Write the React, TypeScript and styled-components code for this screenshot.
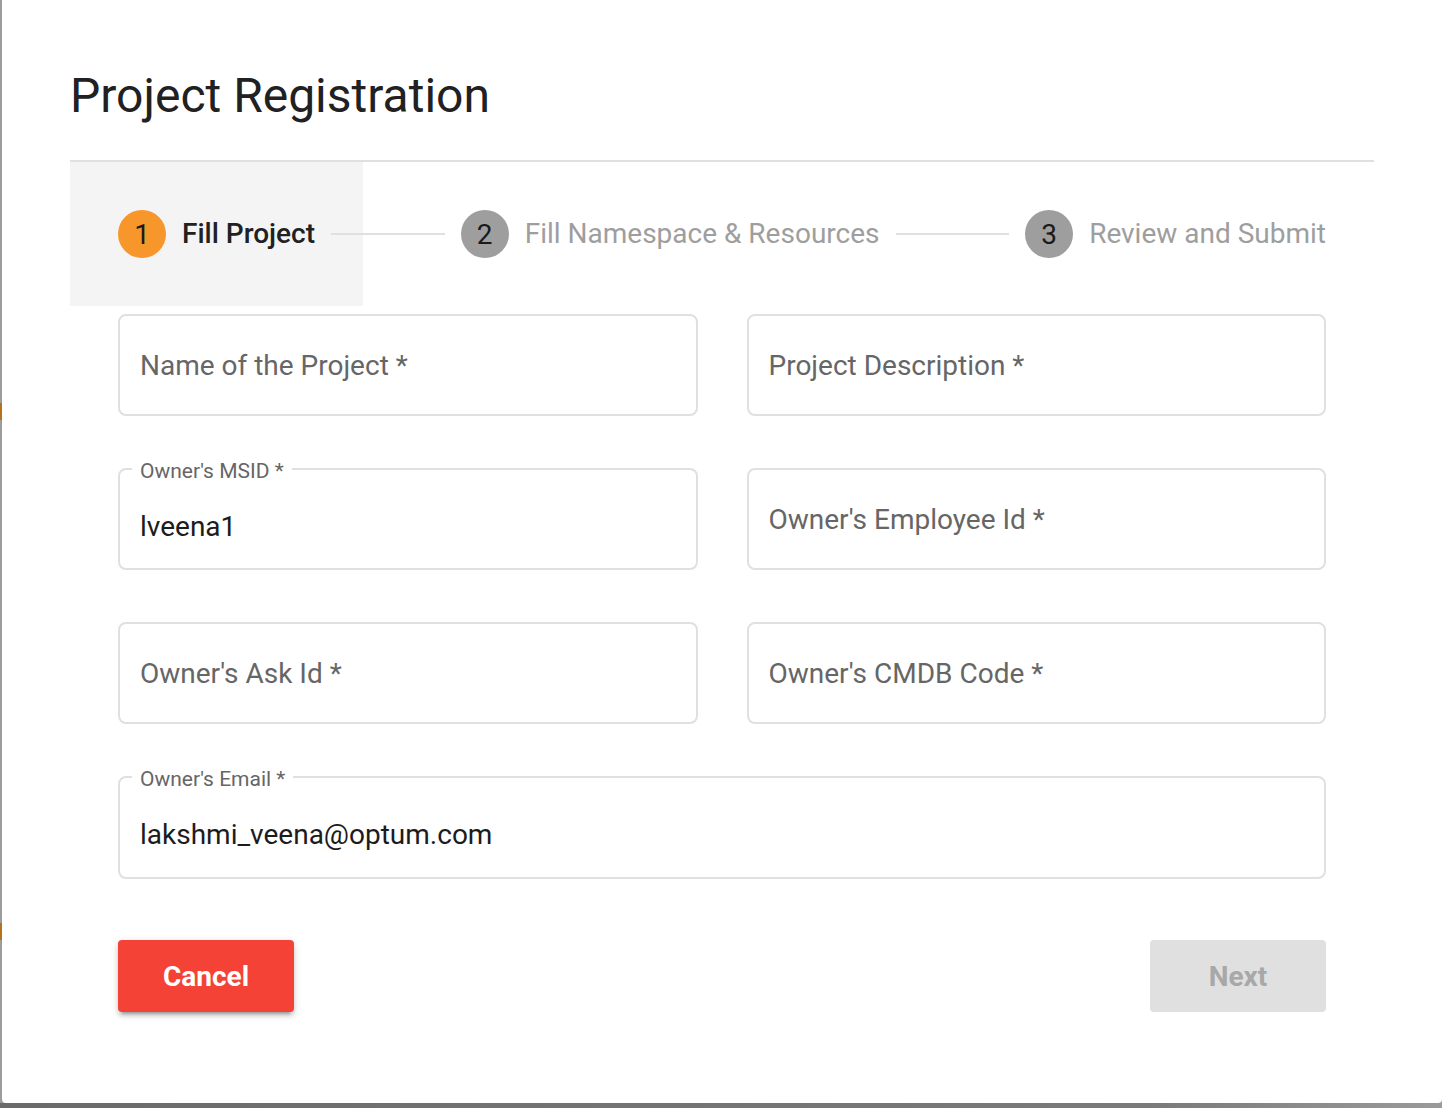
import React from "react";
import styled, { createGlobalStyle } from "styled-components";

const GlobalStyle = createGlobalStyle`
  html, body {
    margin: 0;
    padding: 0;
    overflow: hidden;
    font-family: Roboto, "Liberation Sans", Arial, sans-serif;
  }
  * { box-sizing: border-box; }
`;

const Page = styled.div`
  width: 1442px;
  height: 1108px;
  padding-left: 2px;
  background-color: #9c9c9c;
  background-image:
    linear-gradient(to bottom, transparent 403px, #b5741c 403px, #b5741c 420px, transparent 420px),
    linear-gradient(to bottom, transparent 923px, #b5741c 923px, #b5741c 940px, transparent 940px),
    linear-gradient(to right, #6a6a6a, #7a7a7a 80%, #9a9a9a);
  background-size: 2px 100%, 2px 100%, 100% 5px;
  background-position: 0 0, 0 0, 0 100%;
  background-repeat: no-repeat;
`;

const Dialog = styled.div`
  width: 1440px;
  height: 1103px;
  background: #ffffff;
  border-bottom-left-radius: 4px;
  border-bottom-right-radius: 4px;
  padding: 0 68px;
  display: flex;
  flex-direction: column;
`;

const Title = styled.h1`
  margin: 68px 0 0 0;
  font-size: 48px;
  line-height: 56px;
  font-weight: 400;
  color: #212121;
  letter-spacing: 0;
`;

const Stepper = styled.div`
  margin-top: 36px;
  border-top: 2px solid #e0e0e0;
  display: flex;
  align-items: center;
  padding: 0 48px;
`;

const Step = styled.div<{ $active?: boolean }>`
  display: flex;
  align-items: center;
  gap: 16px;
  flex-shrink: 0;
  ${(p) =>
    p.$active &&
    `
    background: #f4f4f4;
    padding: 48px;
    margin: 0 -48px 0 -48px;
  `}
`;

const Circle = styled.div<{ $active?: boolean }>`
  width: 48px;
  height: 48px;
  border-radius: 50%;
  background: ${(p) => (p.$active ? "#f7972b" : "#9e9e9e")};
  color: #1a1a1a;
  font-size: 28px;
  display: flex;
  align-items: center;
  justify-content: center;
`;

const StepLabel = styled.span<{ $active?: boolean }>`
  font-size: 28px;
  line-height: 32px;
  font-weight: ${(p) => (p.$active ? 500 : 400)};
  color: ${(p) => (p.$active ? "#212121" : "#9e9e9e")};
  white-space: nowrap;
`;

const Connector = styled.div`
  flex: 1;
  height: 2px;
  margin: 0 16px;
  background: #e0e0e0;
`;

const Form = styled.div`
  margin-top: 8px;
  padding: 0 48px;
  display: grid;
  grid-template-columns: 1fr 1fr;
  column-gap: 49px;
  row-gap: 52px;
`;

const Field = styled.div<{ $wide?: boolean }>`
  position: relative;
  height: ${(p) => (p.$wide ? 103 : 102)}px;
  border: 2px solid #e0e0e0;
  border-radius: 8px;
  padding: 0 20px;
  display: flex;
  align-items: center;
  grid-column: ${(p) => (p.$wide ? "1 / span 2" : "auto")};
`;

const Placeholder = styled.span`
  font-size: 28px;
  color: #666666;
`;

const Value = styled.span`
  font-size: 28px;
  color: #1c1c1c;
  margin-top: 14px;
`;

const FloatingLabel = styled.span`
  position: absolute;
  top: -11px;
  left: 12px;
  padding: 0 8px;
  background: #ffffff;
  font-size: 21px;
  line-height: 24px;
  color: #666666;
`;

const Actions = styled.div`
  margin-top: 61px;
  padding: 0 48px;
  display: flex;
  justify-content: space-between;
`;

const Button = styled.button<{ $variant: "danger" | "disabled" }>`
  width: 176px;
  height: 72px;
  border: none;
  border-radius: 4px;
  font-family: Roboto, "Liberation Sans", Arial, sans-serif;
  font-size: 28px;
  font-weight: 700;
  background: ${(p) => (p.$variant === "danger" ? "#f44336" : "#e0e0e0")};
  color: ${(p) => (p.$variant === "danger" ? "#ffffff" : "#a8a8a8")};
  box-shadow: ${(p) =>
    p.$variant === "danger"
      ? "0 6px 2px -4px rgba(0,0,0,0.2), 0 4px 4px 0 rgba(0,0,0,0.14), 0 2px 10px 0 rgba(0,0,0,0.12)"
      : "none"};
  cursor: pointer;
`;

const steps = ["Fill Project", "Fill Namespace & Resources", "Review and Submit"];

export default function App() {
  return (
    <>
      <GlobalStyle />
      <Page>
        <Dialog>
          <Title>Project Registration</Title>
          <Stepper>
            {steps.map((s, i) => (
              <React.Fragment key={s}>
                {i > 0 && <Connector />}
                <Step $active={i === 0}>
                  <Circle $active={i === 0}>{i + 1}</Circle>
                  <StepLabel $active={i === 0}>{s}</StepLabel>
                </Step>
              </React.Fragment>
            ))}
          </Stepper>
          <Form>
            <Field>
              <Placeholder>Name of the Project *</Placeholder>
            </Field>
            <Field>
              <Placeholder>Project Description *</Placeholder>
            </Field>
            <Field>
              <FloatingLabel>Owner's MSID *</FloatingLabel>
              <Value>lveena1</Value>
            </Field>
            <Field>
              <Placeholder>Owner's Employee Id *</Placeholder>
            </Field>
            <Field>
              <Placeholder>Owner's Ask Id *</Placeholder>
            </Field>
            <Field>
              <Placeholder>Owner's CMDB Code *</Placeholder>
            </Field>
            <Field $wide>
              <FloatingLabel>Owner's Email *</FloatingLabel>
              <Value>lakshmi_veena@optum.com</Value>
            </Field>
          </Form>
          <Actions>
            <Button $variant="danger">Cancel</Button>
            <Button $variant="disabled">Next</Button>
          </Actions>
        </Dialog>
      </Page>
    </>
  );
}
